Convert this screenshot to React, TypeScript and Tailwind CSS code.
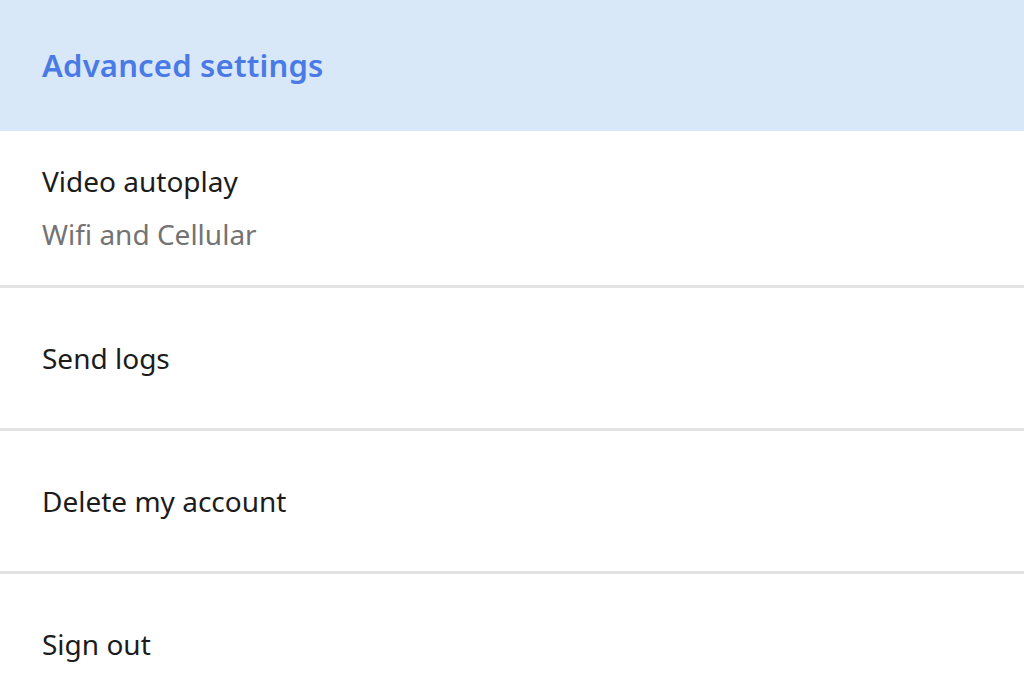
import React from 'react';

const rows = [
  { title: 'Send logs' },
  { title: 'Delete my account' },
  { title: 'Sign out' },
];

export default function App() {
  return (
    <div className="w-[1024px] h-[700px] overflow-hidden bg-white font-['Noto_Sans',sans-serif]">
      {/* Header */}
      <div className="h-[131px] bg-[#d9e8f9] flex items-center px-[42px]">
        <h1 className="text-[31px] font-semibold text-[#4a7ae6] tracking-[0.2px]">Advanced settings</h1>
      </div>

      {/* Video autoplay */}
      <div className="h-[157px] flex flex-col justify-center px-[42px] border-b-[3px] border-[#e3e3e3]">
        <div className="text-[28px] text-[#1c1c1c] leading-[53px]">Video autoplay</div>
        <div className="text-[28px] text-[#737373] leading-[53px]">Wifi and Cellular</div>
      </div>

      {rows.map((row) => (
        <div
          key={row.title}
          className="h-[143px] flex items-center px-[42px] border-b-[3px] border-[#e3e3e3]"
        >
          <span className="text-[28px] text-[#1c1c1c]">{row.title}</span>
        </div>
      ))}
    </div>
  );
}
